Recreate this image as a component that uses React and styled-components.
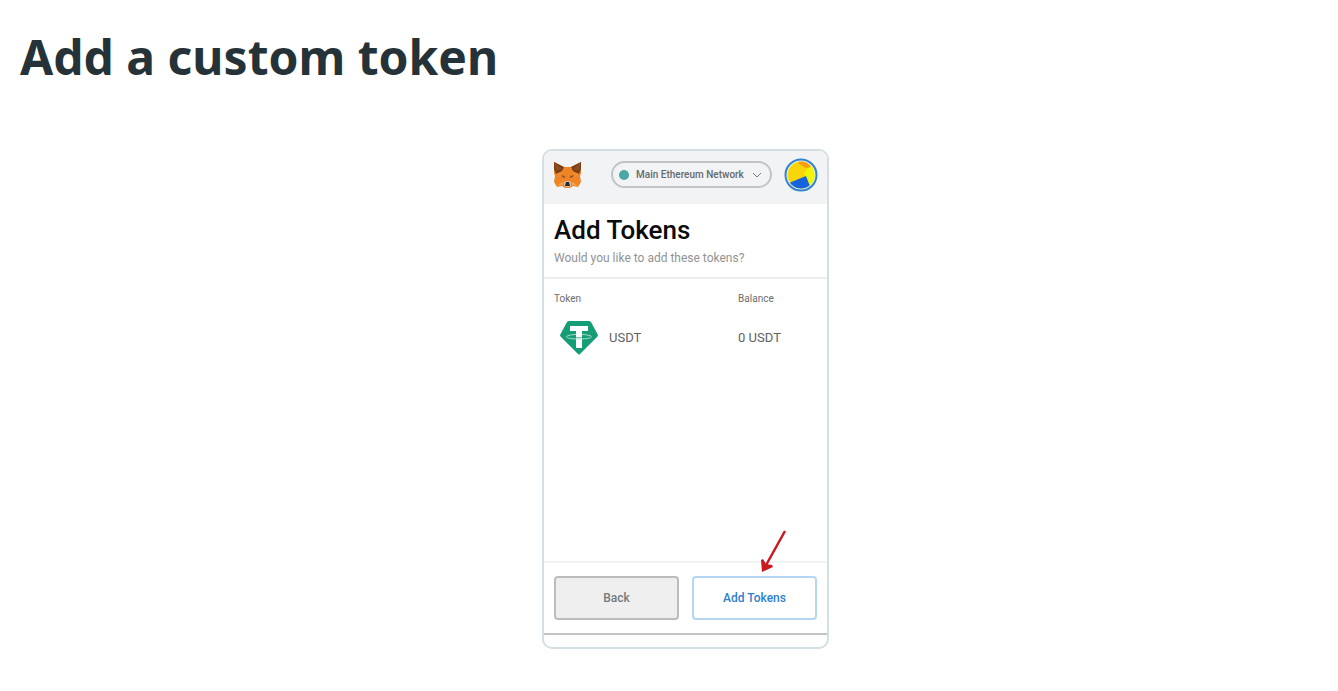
import React from "react";
import styled, { createGlobalStyle } from "styled-components";

const GlobalStyle = createGlobalStyle`
  *, *::before, *::after { box-sizing: border-box; }
  body {
    margin: 0;
    background: #fff;
    color: #253238;
    font-family: Roboto, "Liberation Sans", sans-serif;
  }
`;

const Page = styled.main`
  padding: 23px 0 40px 20px;
`;

const PageTitle = styled.h1`
  margin: 0;
  font: 700 48px/68px "Noto Sans", "Open Sans", sans-serif;
  color: #253238;
`;

const Stage = styled.div`
  display: flex;
  justify-content: center;
  margin-top: 58px;
  padding-left: 13px;
`;

const Card = styled.section`
  display: flex;
  flex-direction: column;
  width: 287px;
  padding-bottom: 12px;
  overflow: hidden;
  border: 2px solid #d3dfe3;
  border-radius: 10px;
  background: #fff;
`;

const Header = styled.header`
  display: flex;
  align-items: center;
  height: 53px;
  padding: 0 9px 6px 10px;
  background: #f2f3f4;
`;

const NetworkPicker = styled.label`
  position: relative;
  display: flex;
  align-items: center;
  width: 161px;
  height: 27px;
  margin: 0 12px 0 auto;
  border: 2px solid #c0c4c7;
  border-radius: 14px;
`;

const StatusDot = styled.span`
  position: absolute;
  left: 6px;
  width: 10px;
  height: 10px;
  border-radius: 50%;
  background: #4ba6a6;
  pointer-events: none;
`;

const NetworkSelect = styled.select`
  appearance: none;
  width: 100%;
  height: 100%;
  padding: 0 24px 0 23px;
  border: 0;
  background: transparent;
  color: #66696c;
  font: 500 10px/14px Roboto, sans-serif;
`;

const Chevron = styled.svg`
  position: absolute;
  right: 8px;
  pointer-events: none;
`;

const Avatar = styled.button`
  display: flex;
  padding: 0;
  border: 0;
  border-radius: 50%;
  background: none;
`;

const Intro = styled.div`
  padding: 10px 10px 11px;
  border-bottom: 2px solid #ebedee;
`;

const Heading = styled.h2`
  margin: 0;
  color: #0b0b0b;
  font-weight: 500;
  font-size: 26px;
  line-height: 32px;
`;

const Subheading = styled.p`
  margin: 4px 0 0;
  color: #919395;
  font-size: 12px;
  line-height: 16px;
`;

const TokenArea = styled.div`
  height: 282px;
  padding: 12px 10px 0;
`;

const TokenTable = styled.table`
  width: 100%;
  border-collapse: collapse;
  table-layout: fixed;
`;

const ColumnHead = styled.th`
  width: ${(p) => p.$width || "auto"};
  padding: 0;
  color: #6c6e70;
  text-align: left;
  font-weight: 400;
  font-size: 10px;
  line-height: 16px;
`;

const Cell = styled.td`
  height: 62px;
  padding: 0;
  color: #5f6163;
  font-size: 13px;
  line-height: 16px;
`;

const TokenName = styled.div`
  display: flex;
  align-items: center;
  gap: 11px;
  padding-left: 6px;
`;

const Footer = styled.footer`
  position: relative;
  display: flex;
  gap: 13px;
  padding: 13px 10px;
  border-top: 2px solid #f1f2f3;
  border-bottom: 2px solid #c3c4c5;
`;

const ActionButton = styled.button`
  flex: 1;
  height: 44px;
  padding: 0;
  border: 2px solid ${(p) => (p.$primary ? "#b3d7f3" : "#bcbcbc")};
  border-radius: 4px;
  background: ${(p) => (p.$primary ? "#fff" : "#efefef")};
  color: ${(p) => (p.$primary ? "#2f80d0" : "#777a7d")};
  font: 500 12px/16px Roboto, sans-serif;
`;

const Pointer = styled.svg`
  position: absolute;
  right: 40px;
  top: -34px;
  pointer-events: none;
`;

function FoxLogo() {
  return (
    <svg width="28" height="27" viewBox="0 0 28 27" aria-label="MetaMask" role="img">
      <path d="M0 1 10 6h7l10-5v11l-1 3 1 6-3 5-5-1-3 2h-5l-3-2-5 1-3-5 1-6-1-3z" fill="#ee8425" />
      <path d="M0 1 10 6 8 10 2 13 0 8zM27 1 17 6l2 4 6 3 2-5z" fill="#74401c" />
      <path d="m0 1 8 7-6 2zM27 1l-8 7 6 2z" fill="#8e4b1d" />
      <path d="m2 13 6-2 3 6-6-1zM25 13l-6-2-3 6 6-1z" fill="#f08a2a" />
      <path d="m7 14 4 1v2l-3-1zM20 14l-4 1v2l3-1z" fill="#9b5428" />
      <path d="m3 25 5-4 2 1-1 2zM24 25l-5-4-2 1 1 2z" fill="#f3a04f" />
      <path d="m10 21 2-1h3l2 1v4l-2 1h-3l-2-1z" fill="#d3bda9" />
      <path d="M12 21h3l1 4h-5z" fill="#2d2925" />
    </svg>
  );
}

function AvatarArt() {
  return (
    <svg width="34" height="34" viewBox="0 0 34 34" aria-hidden="true">
      <defs>
        <clipPath id="avatar-disc">
          <circle cx="17" cy="17" r="13.5" />
        </clipPath>
      </defs>
      <circle cx="17" cy="17" r="15.5" fill="#e6f0f2" stroke="#3384ce" strokeWidth="2" />
      <g clipPath="url(#avatar-disc)">
        <rect width="34" height="34" fill="#f9d60a" />
        <path d="m20 15 5-6 8-2v22l-7-1-4-8z" fill="#eff607" />
        <path d="M14 3h8l5 6-5 1-7-4z" fill="#fb9d11" />
        <path d="m5 25 17-7 5 13-12 3z" fill="#1763dd" />
      </g>
    </svg>
  );
}

function TetherLogo() {
  return (
    <svg width="38" height="34" viewBox="0 0 38 34" aria-hidden="true">
      <path d="M9 0h20q1 0 2 1l7 13q0 1-1 2L20 33q-1 1-2 0L1 16q-1-1-1-2L7 1q1-1 2-1z" fill="#159d75" />
      <path d="M10 5h18v5h-6v17h-6V10h-6z" fill="#fff" />
      <path d="M16 13.500C3 14 3 18 19 18s16-4 3-4.500" fill="none" stroke="#a9dccb" strokeWidth="1" />
      <path d="M16 16.500h6" stroke="#74c6ac" strokeWidth="1" />
    </svg>
  );
}

export default function App() {
  return (
    <>
      <GlobalStyle />
      <Page>
        <PageTitle>Add a custom token</PageTitle>
        <Stage>
          <Card>
            <Header>
              <FoxLogo />
              <NetworkPicker>
                <StatusDot />
                <NetworkSelect aria-label="Network">
                  <option>Main Ethereum Network</option>
                </NetworkSelect>
                <Chevron width="10" height="6" viewBox="0 0 10 6" aria-hidden="true">
                  <path d="m1 1 4 4 4-4" fill="none" stroke="#75797c" />
                </Chevron>
              </NetworkPicker>
              <Avatar type="button" aria-label="Account">
                <AvatarArt />
              </Avatar>
            </Header>
            <Intro>
              <Heading>Add Tokens</Heading>
              <Subheading>Would you like to add these tokens?</Subheading>
            </Intro>
            <TokenArea>
              <TokenTable>
                <thead>
                  <tr>
                    <ColumnHead scope="col" $width="70%">Token</ColumnHead>
                    <ColumnHead scope="col">Balance</ColumnHead>
                  </tr>
                </thead>
                <tbody>
                  <tr>
                    <Cell>
                      <TokenName>
                        <TetherLogo />
                        USDT
                      </TokenName>
                    </Cell>
                    <Cell>0 USDT</Cell>
                  </tr>
                </tbody>
              </TokenTable>
            </TokenArea>
            <Footer>
              <ActionButton type="button">Back</ActionButton>
              <ActionButton type="button" $primary>Add Tokens</ActionButton>
              <Pointer width="26" height="44" viewBox="0 0 26 44" aria-hidden="true">
                <path d="M24 2 4 38" stroke="#c9181e" strokeWidth="2.500" />
                <path d="M1 43 0 31l2-1 3 5 6 1 1 2z" fill="#c9181e" />
              </Pointer>
            </Footer>
          </Card>
        </Stage>
      </Page>
    </>
  );
}
